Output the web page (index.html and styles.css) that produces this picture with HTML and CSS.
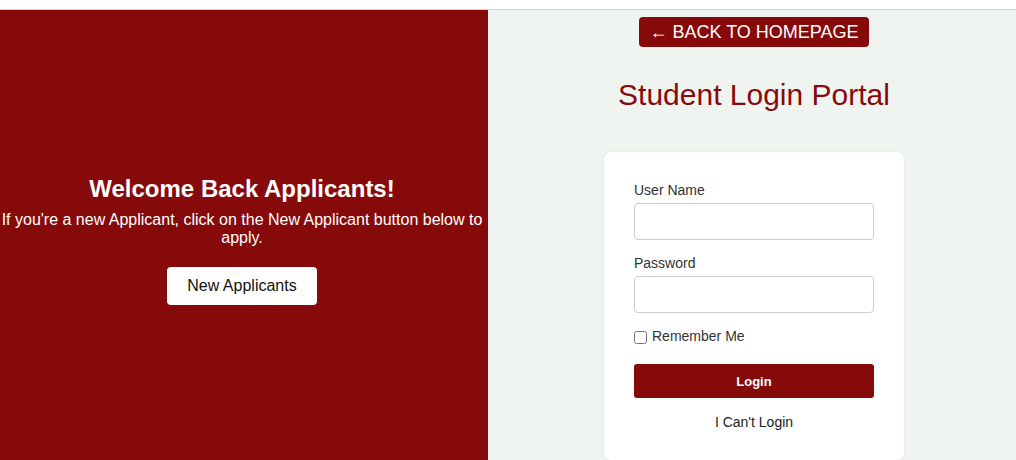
FILE: index.html
```html
<!DOCTYPE html>
<html>
<head>
<meta charset="utf-8">
<link rel="stylesheet" href="styles.css">
</head>
<body>
<div class="topbar"></div>
<main class="page">
  <section class="welcome">
    <div class="welcome-inner">
      <h2 class="welcome-title">Welcome Back Applicants!</h2>
      <p class="welcome-text">If you're a new Applicant, click on the New Applicant button below to apply.</p>
      <button class="btn-new">New Applicants</button>
    </div>
  </section>
  <section class="login">
    <a class="btn-back" href="#">&larr; BACK TO HOMEPAGE</a>
    <h1 class="portal-title">Student Login Portal</h1>
    <form class="card">
      <label class="field-label">User Name</label>
      <input class="field" type="text">
      <label class="field-label">Password</label>
      <input class="field" type="password">
      <label class="remember"><input type="checkbox" class="check"> Remember Me</label>
      <button type="button" class="btn-login">Login</button>
      <a class="cant" href="#">I Can't Login</a>
    </form>
  </section>
</main>
</body>
</html>
```

FILE: styles.css
```css
* { box-sizing: border-box; }
html, body { margin: 0; padding: 0; }
body {
  font-family: "Liberation Sans", Arial, sans-serif;
  background: #fff;
  height: 460px;
  overflow: hidden;
}
.topbar {
  height: 10px;
  border-bottom: 1px solid #d4d4d4;
}
.page {
  display: flex;
  height: 450px;
}
.welcome {
  width: 488px;
  background: #870a0a;
  color: #fff;
  display: flex;
  align-items: center;
  justify-content: center;
  text-align: center;
  padding-right: 4px;
}
.welcome-inner {
  display: flex;
  flex-direction: column;
  align-items: center;
  padding-top: 10px;
}
.welcome-title {
  margin: 0 0 8px;
  font-size: 24px;
  font-weight: bold;
  line-height: 28px;
}
.welcome-text {
  margin: 0 0 20px;
  font-size: 16px;
  line-height: 18px;
}
.btn-new {
  font-family: inherit;
  font-size: 16px;
  color: #111;
  background: #fff;
  border: none;
  border-radius: 4px;
  width: 150px;
  height: 38px;
}
.login {
  flex: 1;
  background: #f0f4f1;
  display: flex;
  flex-direction: column;
  align-items: center;
  padding-left: 4px;
}
.btn-back {
  margin-top: 7px;
  background: #870a0a;
  color: #fff;
  text-decoration: none;
  font-size: 18px;
  line-height: 30px;
  height: 30px;
  padding: 0 10px;
  border-radius: 4px;
}
.portal-title {
  margin: 30px 0 0;
  font-size: 30px;
  font-weight: normal;
  color: #870a0a;
  line-height: 36px;
}
.card {
  margin-top: 39px;
  width: 300px;
  flex: 1;
  background: #fff;
  border-radius: 8px;
  padding: 30px 30px 0;
  display: flex;
  flex-direction: column;
  box-shadow: 0 0 4px rgba(0,0,0,0.05);
}
.field-label {
  font-size: 14px;
  color: #333;
  line-height: 16px;
  margin-bottom: 5px;
}
.field {
  height: 37px;
  border: 1px solid #ccc;
  border-radius: 4px;
  margin-bottom: 15px;
  background: #fff;
}
.remember {
  font-size: 14px;
  color: #333;
  display: flex;
  align-items: center;
  line-height: 16px;
  margin-top: -1px;
}
.check {
  margin: 4px 5px 0 0;
  width: 13px;
  height: 13px;
}
.btn-login {
  margin-top: 20px;
  height: 34px;
  background: #870a0a;
  color: #fff;
  font-family: inherit;
  font-size: 13px;
  font-weight: bold;
  border: none;
  border-radius: 3px;
}
.cant {
  margin-top: 16px;
  text-align: center;
  font-size: 14px;
  color: #222;
  text-decoration: none;
}
```
